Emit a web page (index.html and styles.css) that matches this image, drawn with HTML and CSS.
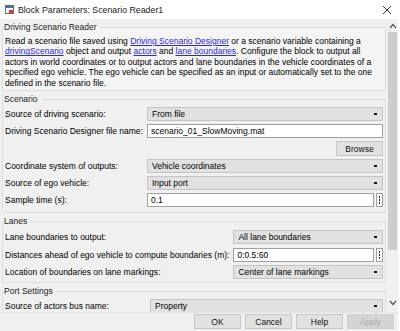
FILE: index.html
```html
<!DOCTYPE html>
<html lang="en">
<head>
  <meta charset="UTF-8">
  <title>Block Parameters: Scenario Reader1</title>
  <link rel="stylesheet" href="styles.css">
</head>
<body>
  <div class="window">
    <div class="titlebar">
      <svg class="block-icon" width="9" height="9" viewBox="0 0 9 9">
        <rect x="0.5" y="0.5" width="8" height="8" fill="#fff" stroke="#6b6b6b"/>
        <rect x="1" y="1" width="7" height="2" fill="#3a6fc4"/>
        <rect x="4" y="5" width="4" height="3" fill="#d23a2a"/>
      </svg>
      <span class="title">Block Parameters: Scenario Reader1</span>
      <svg class="close" width="10" height="10" viewBox="0 0 10 10">
        <path d="M1 1 L9 9 M9 1 L1 9" stroke="#333" stroke-width="1"/>
      </svg>
    </div>

    <div class="main">
      <div class="content">
        <fieldset class="group desc-group">
          <legend>Driving Scenario Reader</legend>
          <p class="desc">
            Read a scenario file saved using <a href="#">Driving Scenario Designer</a> or a scenario variable containing a<br>
            <a href="#">drivingScenario</a> object and output <a href="#">actors</a> and <a href="#">lane boundaries</a>. Configure the block to output all<br>
            actors in world coordinates or to output actors and lane boundaries in the vehicle coordinates of a<br>
            specified ego vehicle. The ego vehicle can be specified as an input or automatically set to the one<br>
            defined in the scenario file.
          </p>
        </fieldset>

        <fieldset class="group">
          <legend>Scenario</legend>
          <div class="params">
            <label>Source of driving scenario:</label>
            <div class="dropdown">From file<span class="arrow"></span></div>

            <label>Driving Scenario Designer file name:</label>
            <div class="textbox">scenario_01_SlowMoving.mat</div>

            <span></span>
            <div class="browse-row"><button class="btn">Browse</button></div>

            <label>Coordinate system of outputs:</label>
            <div class="dropdown">Vehicle coordinates<span class="arrow"></span></div>

            <label>Source of ego vehicle:</label>
            <div class="dropdown">Input port<span class="arrow"></span></div>

            <label>Sample time (s):</label>
            <div class="field-more">
              <div class="textbox">0.1</div>
              <span class="more"><i></i><i></i><i></i></span>
            </div>
          </div>
        </fieldset>

        <fieldset class="group lanes-group">
          <legend>Lanes</legend>
          <div class="params lanes">
            <label>Lane boundaries to output:</label>
            <div class="dropdown">All lane boundaries<span class="arrow"></span></div>

            <label>Distances ahead of ego vehicle to compute boundaries (m):</label>
            <div class="field-more">
              <div class="textbox">0:0.5:60</div>
              <span class="more"><i></i><i></i><i></i></span>
            </div>

            <label>Location of boundaries on lane markings:</label>
            <div class="dropdown">Center of lane markings<span class="arrow"></span></div>
          </div>
        </fieldset>

        <fieldset class="group">
          <legend>Port Settings</legend>
          <div class="params port">
            <label>Source of actors bus name:</label>
            <div class="dropdown">Property<span class="arrow"></span></div>
          </div>
        </fieldset>
      </div>

      <div class="scrollbar">
        <svg class="sb-arrow" width="8" height="6" viewBox="0 0 8 6">
          <path d="M1 5 L4 1.5 L7 5" fill="none" stroke="#555" stroke-width="1.2"/>
        </svg>
        <div class="track"><div class="thumb"></div></div>
        <svg class="sb-arrow" width="8" height="6" viewBox="0 0 8 6">
          <path d="M1 1 L4 4.5 L7 1" fill="none" stroke="#555" stroke-width="1.2"/>
        </svg>
      </div>
    </div>

    <div class="footer">
      <button class="btn">OK</button>
      <button class="btn">Cancel</button>
      <button class="btn">Help</button>
      <button class="btn" disabled>Apply</button>
    </div>
  </div>
</body>
</html>
```

FILE: styles.css
```css
* {
  box-sizing: border-box;
}
body {
  margin: 0;
  font-family: 'Liberation Sans', Arial, sans-serif;
  font-size: 8.5px;
  color: #000;
  background: #f0f0f0;
  overflow: hidden;
}
.window {
  width: 400px;
  height: 331px;
  display: flex;
  flex-direction: column;
  background: #f0f0f0;
  border-right: 2px solid #fff;
}
.titlebar {
  height: 19px;
  background: #fff;
  display: flex;
  align-items: center;
  padding: 0 6px 0 5px;
  flex-shrink: 0;
}
.block-icon {
  margin-right: 4px;
}
.title {
  flex: 1;
  font-size: 8.8px;
  color: #1a1a1a;
}
.close {
  margin-top: 1px;
}
.main {
  flex: 1;
  display: flex;
  overflow: hidden;
}
.content {
  width: 387px;
  padding: 3px 1px 0 2px;
  overflow: hidden;
}
.group {
  margin: 0 0 3px;
  padding: 0 2px 5px 2px;
  border: 1px solid #dedede;
  border-radius: 1px;
}
.group legend {
  padding: 0 3px 0 0;
  margin-left: -1px;
  line-height: 11px;
  color: #222;
}
.desc-group {
  background: #f4f4f4;
  padding-bottom: 2px;
}
.lanes-group {
  padding-bottom: 3px;
}
.desc {
  margin: 3px 0 0 0;
  line-height: 10.4px;
  white-space: nowrap;
}
.desc a {
  color: #2a2ae0;
}
.params {
  display: grid;
  grid-template-columns: auto 1fr;
  column-gap: 4px;
  row-gap: 3px;
  align-items: center;
  margin-top: 2px;
}
.params.lanes {
  row-gap: 3.5px;
  margin-top: 3px;
}
.params.port {
  grid-template-columns: 141px 1fr;
}
.params label {
  white-space: nowrap;
}
.dropdown {
  position: relative;
  height: 14px;
  line-height: 12px;
  padding-left: 4px;
  background: #e1e1e1;
  border: 1px solid #c4c4c4;
  white-space: nowrap;
}
.arrow {
  position: absolute;
  right: 5px;
  top: 5px;
  width: 3px;
  height: 2px;
  background: #111;
}
.textbox {
  flex: 1;
  height: 14px;
  line-height: 12px;
  padding-left: 3px;
  background: #fff;
  border: 1px solid #a0a0a0;
  white-space: nowrap;
}
.field-more {
  display: flex;
  gap: 2px;
}
.more {
  width: 7px;
  height: 14px;
  display: flex;
  flex-direction: column;
  align-items: center;
  justify-content: center;
  gap: 1px;
  background: #fff;
  border: 1px solid #a0a0a0;
}
.more i {
  width: 1px;
  height: 2px;
  background: #222;
}
.browse-row {
  display: flex;
  justify-content: flex-end;
}
.btn {
  font-family: inherit;
  font-size: 8.5px;
  color: #111;
  height: 15px;
  width: 47px;
  padding: 0;
  background: #e1e1e1;
  border: 1px solid #c8c8c8;
}
.btn:disabled {
  color: #a8a8a8;
  background: #d4d4d4;
  border-color: #d0d0d0;
}
.scrollbar {
  width: 11px;
  display: flex;
  flex-direction: column;
  align-items: center;
  padding: 4px 0 6px;
  background: #f0f0f0;
}
.sb-arrow {
  flex-shrink: 0;
}
.track {
  flex: 1;
  width: 9px;
  padding: 3px 0 50px;
  display: flex;
}
.thumb {
  flex: 1;
  background: #cdcdcd;
}
.footer {
  height: 19px;
  flex-shrink: 0;
  display: flex;
  justify-content: flex-end;
  align-items: flex-start;
  gap: 4px;
  padding: 1px 4px 0 0;
  border-top: 1px solid #e4e4e4;
}
```
